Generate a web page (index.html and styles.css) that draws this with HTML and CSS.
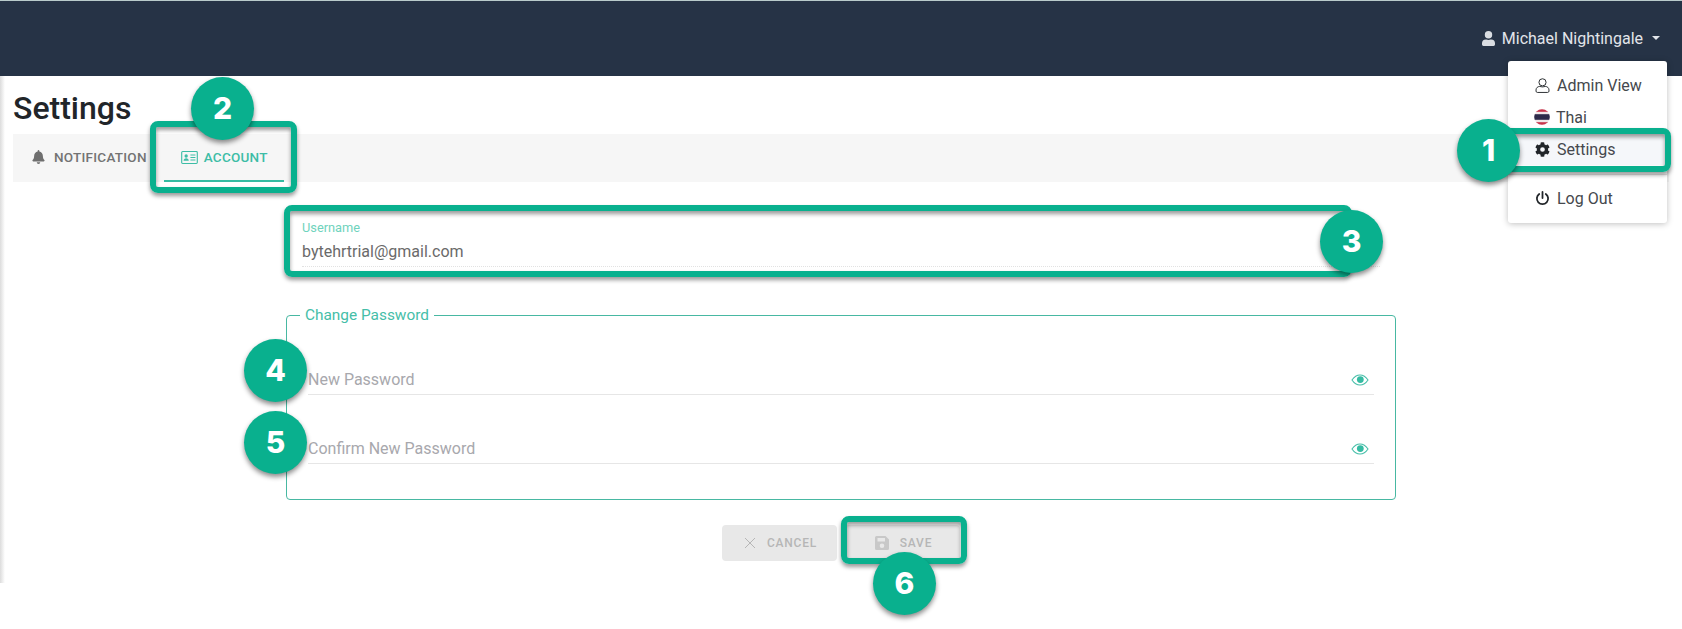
FILE: index.html
```html
<!DOCTYPE html>
<html lang="en">
<head>
<meta charset="utf-8">
<title>Settings</title>
<link rel="stylesheet" href="styles.css">
</head>
<body>
<header class="topbar">
  <div class="user">
    <svg class="user-icon" viewBox="0 0 448 512"><path d="M224 256a128 128 0 1 0 0-256 128 128 0 0 0 0 256zm90 32h-17a174 174 0 0 1-146 0h-17A134 134 0 0 0 0 422v42a48 48 0 0 0 48 48h352a48 48 0 0 0 48-48v-42a134 134 0 0 0-134-134z"/></svg>
    <span>Michael Nightingale</span>
    <i class="caret"></i>
  </div>
</header>
<div class="page">
  <main class="content">
    <h1 class="title">Settings</h1>
    <nav class="tabs">
      <div class="tab">
        <svg class="tab-icon" viewBox="0 0 448 512"><path d="M224 512a64 64 0 0 0 64-64H160a64 64 0 0 0 64 64zm215-150c-19-21-56-52-56-154 0-78-54-140-128-155V32a31 31 0 1 0-62 0v21C119 68 65 130 65 208c0 102-37 133-56 154-6 6-9 14-9 22 0 16 13 32 32 32h384c19 0 32-16 32-32 0-8-3-16-9-22z"/></svg>
        NOTIFICATION
      </div>
      <div class="tab tab-active">
        <svg class="tab-icon-card" viewBox="0 0 18 14"><rect x="0.6" y="0.6" width="16.8" height="12.8" rx="1" fill="none" stroke="currentColor" stroke-width="1.2"/><circle cx="5.4" cy="5.4" r="1.8"/><path d="M2.6 10.6c0-2 1.2-2.9 2.8-2.9s2.8.9 2.8 2.9z"/><path d="M10 4.2h5.4M10 7h5.4M10 9.8h5.4" stroke="currentColor" stroke-width="1.1"/></svg>
        ACCOUNT
      </div>
    </nav>
    <section class="form">
      <div class="username">
        <label class="username-label">Username</label>
        <div class="username-value">bytehrtrial@gmail.com</div>
      </div>
      <fieldset class="password-box">
        <legend class="password-legend">Change Password</legend>
        <div class="field">
          <span>New Password</span>
          <svg class="eye" viewBox="0 0 18 12"><path d="M1 6c2-3 5-5 8-5s6 2 8 5c-2 3-5 5-8 5S3 9 1 6z" fill="none" stroke="currentColor" stroke-width="1.1"/><circle cx="9.3" cy="5.6" r="3.4"/></svg>
        </div>
        <div class="field">
          <span>Confirm New Password</span>
          <svg class="eye" viewBox="0 0 18 12"><path d="M1 6c2-3 5-5 8-5s6 2 8 5c-2 3-5 5-8 5S3 9 1 6z" fill="none" stroke="currentColor" stroke-width="1.1"/><circle cx="9.3" cy="5.6" r="3.4"/></svg>
        </div>
      </fieldset>
      <div class="actions">
        <button class="btn">
          <svg class="btn-x" viewBox="0 0 12 12"><path d="M1 1l10 10M11 1L1 11" fill="none" stroke="currentColor" stroke-width="1"/></svg>
          CANCEL
        </button>
        <button class="btn">
          <svg class="btn-save" viewBox="0 0 14 14"><path fill-rule="evenodd" d="M1.5 0h9L14 3.5V12.5A1.5 1.5 0 0 1 12.5 14h-11A1.5 1.5 0 0 1 0 12.5v-11A1.5 1.5 0 0 1 1.5 0zM2.5 2v3.5h7.5V2zM7 7.5a2.3 2.3 0 1 0 0 4.6 2.3 2.3 0 0 0 0-4.6z"/></svg>
          SAVE
        </button>
      </div>
    </section>
  </main>
</div>

<div class="menu">
  <div class="menu-item"><svg class="menu-icon" viewBox="0 0 15 16"><circle cx="7.5" cy="4.6" r="3.8" fill="none" stroke="currentColor" stroke-width="1"/><path d="M.6 14v-1.300C.6 10.500 2.500 9 4.500 9c1 0 1.700.5 3 .5s2-.5 3-.5c2 0 3.900 1.500 3.900 3.700V14c0 .8-.6 1.400-1.400 1.400H2c-.8 0-1.400-.6-1.400-1.400z" fill="none" stroke="currentColor" stroke-width="1"/></svg>Admin View</div>
  <div class="menu-item"><svg class="flag" viewBox="0 0 16 16"><defs><clipPath id="flag-clip"><circle cx="8" cy="8" r="7.8"/></clipPath></defs><g clip-path="url(#flag-clip)"><rect width="16" height="16" fill="#f0e6e8"/><rect width="16" height="2.8" fill="#c8334a"/><rect y="13.2" width="16" height="2.8" fill="#c8334a"/><rect y="5.2" width="16" height="5.6" fill="#2d2a4a"/></g></svg>Thai</div>
  <div class="menu-item menu-item-active"><svg class="menu-icon gear" viewBox="0 0 512 512"><path d="M487 316l-43-25a194 194 0 0 0 0-70l43-25c5-3 7-9 5-14-11-36-30-68-55-95-4-4-10-5-15-2l-43 25a190 190 0 0 0-60-35V25c0-6-4-10-9-12-37-8-75-8-110 0-5 2-9 6-9 12v50a196 196 0 0 0-60 35L88 85c-5-3-11-2-15 2-25 27-44 59-55 95-2 5 0 11 5 14l43 25a194 194 0 0 0 0 70l-43 25c-5 3-7 9-5 14 11 36 30 68 55 95 4 4 10 5 15 2l43-25a190 190 0 0 0 60 35v50c0 6 4 10 9 12 37 8 75 8 110 0 5-2 9-6 9-12v-50a196 196 0 0 0 60-35l43 25c5 3 11 2 15-2 25-27 44-59 55-95 2-5 0-11-5-14zM256 336a80 80 0 1 1 0-160 80 80 0 0 1 0 160z"/></svg>Settings</div>
  <div class="menu-divider"></div>
  <div class="menu-item"><svg class="menu-icon" viewBox="0 0 16 16"><path d="M4.5 3.2a6 6 0 1 0 7 0" fill="none" stroke="currentColor" stroke-width="1.9" stroke-linecap="round"/><path d="M8 1v6.5" fill="none" stroke="currentColor" stroke-width="1.9" stroke-linecap="round"/></svg>Log Out</div>
</div>

<div class="ring ring-1"></div>
<div class="ring ring-2"></div>
<div class="ring ring-3"></div>
<div class="ring ring-6"></div>
<div class="badge badge-1">1</div>
<div class="badge badge-2">2</div>
<div class="badge badge-3">3</div>
<div class="badge badge-4">4</div>
<div class="badge badge-5">5</div>
<div class="badge badge-6">6</div>
</body>
</html>
```

FILE: styles.css
```css
* { box-sizing: border-box; }
html, body { margin: 0; padding: 0; }
body {
  width: 1682px;
  height: 629px;
  overflow: hidden;
  position: relative;
  background: #fff;
  font-family: Roboto, "Liberation Sans", sans-serif;
  color: #212529;
}
.topbar {
  height: 76px;
  background: #263346;
  border-top: 1px solid #b9cbcb;
  display: flex;
  justify-content: flex-end;
  padding: 28px 22px 0 0;
}
.user {
  display: flex;
  align-items: flex-start;
  color: #e2e5ea;
  font-size: 16px;
  line-height: 20px;
  height: 20px;
}
.user-icon { width: 13px; height: 15px; fill: #d9dde2; margin: 2px 7px 0 0; }
.caret {
  width: 0; height: 0;
  margin: 7px 0 0 9px;
  border-left: 4px solid transparent;
  border-right: 4px solid transparent;
  border-top: 4px solid #e2e5ea;
}
.page {
  height: 507px;
  background: linear-gradient(to right, #dcdcdc, #fff 5px);
  padding: 0 13px;
}
.content { display: flex; flex-direction: column; }
.title {
  margin: 13px 0 0;
  font-size: 32px;
  font-weight: 500;
  line-height: 38px;
  color: #212529;
}
.tabs {
  margin-top: 7px;
  height: 48px;
  background: #f6f6f6;
  display: flex;
}
.tab {
  display: flex;
  align-items: center;
  height: 48px;
  padding: 0 8px 2px 19px;
  font-size: 13.5px;
  font-weight: 500;
  color: #737373;
  letter-spacing: 0.25px;
}
.tab-icon { width: 13px; height: 14px; fill: #6f6f6f; margin-right: 9px; }
.tab-active {
  color: #3dbda6;
  margin-left: 9px;
  padding: 0 16px 0 17px;
  border-bottom: 2px solid #35bba2;
}
.tab-icon-card { width: 17px; height: 13px; fill: currentColor; margin-right: 6px; }
.form {
  width: 1110px;
  margin-left: 273px;
  display: flex;
  flex-direction: column;
}
.username {
  margin-top: 24px;
  height: 61px;
  padding: 15px 0 0 16px;
}
.username-label { display: block; font-size: 12.8px; line-height: 14px; color: #6fd3bd; }
.username-value {
  margin-top: 6px;
  height: 26px;
  width: 1078px;
  font-size: 16px;
  line-height: 22px;
  color: #6a6a6a;
  border-bottom: 1px dotted #e2e2e2;
}
.password-box {
  margin: 40px 0 0;
  padding: 0 21px;
  height: 193px;
  width: 1110px;
  border: 1px solid #48b8a2;
  border-radius: 4px;
  min-width: 0;
}
.password-legend {
  margin-left: -8px;
  padding: 0 5px;
  font-size: 15.4px;
  line-height: 17px;
  color: #45bea8;
}
.field {
  height: 40px;
  margin-top: 29px;
  display: flex;
  justify-content: space-between;
  align-items: flex-end;
  padding-bottom: 4px;
  border-bottom: 1px solid #e6e6e6;
  color: #a8a8ad;
  font-size: 16px;
  line-height: 20px;
}
.field:first-of-type { margin-top: 31px; }
.eye { width: 18px; height: 12px; fill: #35bba2; color: #45bea8; margin: 0 5px 4px 0; }
.actions {
  display: flex;
  justify-content: center;
  gap: 8px;
  margin-top: 25px;
}
.btn {
  width: 115px;
  height: 36px;
  border: 0;
  border-radius: 4px;
  background: #e8e8e8;
  color: #b6b6b6;
  display: flex;
  align-items: center;
  justify-content: center;
  padding: 0 0 0 2px;
  font-family: Roboto, "Liberation Sans", sans-serif;
  font-size: 12px;
  font-weight: 500;
  letter-spacing: 0.8px;
}
.btn-x { width: 12px; height: 12px; margin-right: 11px; }
.btn-save { width: 14px; height: 14px; fill: #c8c8c8; margin-right: 11px; }
.menu {
  position: absolute;
  left: 1508px;
  top: 61px;
  width: 159px;
  height: 162px;
  background: #fff;
  border-radius: 3px;
  box-shadow: 0 1px 6px rgba(0,0,0,.25);
  padding-top: 8px;
}
.menu-item {
  height: 32px;
  display: flex;
  align-items: center;
  padding-left: 27px;
  font-size: 16px;
  color: #45484d;
}
.menu-item-active { background: #f5f7fa; }
.menu-divider { height: 1px; background: #e7e7e7; margin: 9px 0 7px; }
.menu-icon { width: 15px; height: 15px; margin-right: 7px; color: #212529; fill: #212529; }
.menu-icon:not(.gear) { fill: none; }
.flag { width: 16px; height: 16px; margin: 0 6px 0 -1px; }
.ring {
  position: absolute;
  border: 6px solid #09b08e;
  border-radius: 8px;
  box-shadow: 0 3px 4px rgba(0,0,0,.4), inset 0 3px 4px rgba(0,0,0,.4);
}
.ring-1 { left: 1500px; top: 128px; width: 171px; height: 44px; }
.ring-2 { left: 150px; top: 121px; width: 147px; height: 72px; }
.ring-3 { left: 284px; top: 205px; width: 1068px; height: 72px; }
.ring-6 { left: 841px; top: 516px; width: 126px; height: 48px; }
.badge {
  position: absolute;
  width: 63px;
  height: 63px;
  border-radius: 50%;
  background: #09b08e;
  color: #fff;
  font-family: Inter, "Open Sans", sans-serif;
  font-weight: 800;
  font-size: 30px;
  line-height: 63px;
  text-align: center;
  box-shadow: 0 3px 5px rgba(0,0,0,.45);
}
.badge-1 { left: 1457px; top: 119px; }
.badge-2 { left: 191px; top: 77px; }
.badge-3 { left: 1320px; top: 210px; }
.badge-4 { left: 244px; top: 339px; }
.badge-5 { left: 244px; top: 411px; }
.badge-6 { left: 873px; top: 552px; }
```
